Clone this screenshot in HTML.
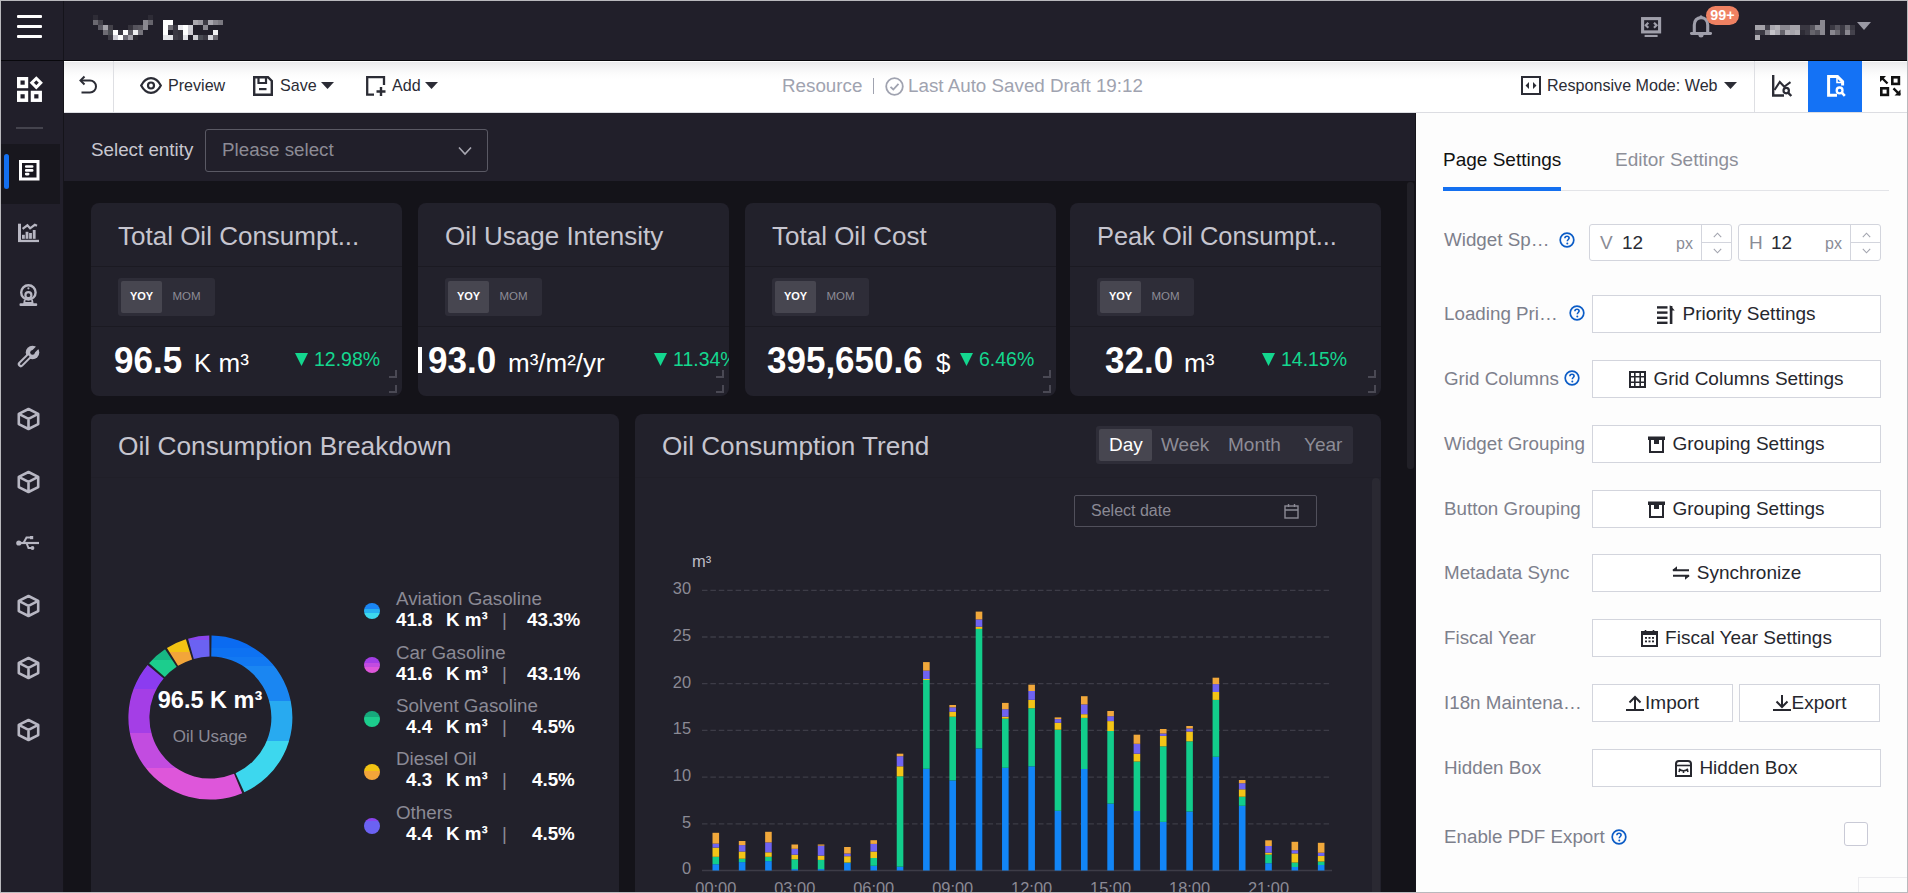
<!DOCTYPE html>
<html><head><meta charset="utf-8">
<style>
*{box-sizing:border-box;margin:0;padding:0}
html,body{width:1908px;height:893px;overflow:hidden;background:#141319;font-family:"Liberation Sans",sans-serif}
.a{position:absolute}
svg{position:absolute;overflow:visible}
#frame{position:absolute;left:0;top:0;width:1908px;height:893px;border:1px solid #b9b9bd;z-index:100;pointer-events:none}
#hdr{left:0;top:0;width:1908px;height:61px;background:#211f2a;border-bottom:1px solid #08080c}
#side{left:0;top:61px;width:64px;height:832px;background:#211f2a;border-right:1px solid #15141a}
#tb{left:64px;top:61px;width:1844px;height:52px;background:linear-gradient(#fdfdfd 0px,#fdfdfd 1px,#ebebed 1px,#f5f5f6 7px,#fbfbfb 12px,#fefefe 16px,#fff 18px);border-bottom:1px solid #dcdde2}
.tbt{position:absolute;font-size:16.1px;color:#2b2c35;line-height:18px;white-space:nowrap}
#filter{left:64px;top:113px;width:1351px;height:68px;background:#211f2a}
.card{position:absolute;background:#22212b;border-radius:8px;overflow:hidden}
.ct{position:absolute;left:27px;top:0;font-size:26px;color:#c6c5cf;line-height:26px;white-space:nowrap}
.hl{position:absolute;left:0;right:0;height:1px;background:#1b1a22}
.seg{position:absolute;left:27px;top:75px;width:97px;height:38px;background:#2e2d38;border-radius:3px}
.seg .on{position:absolute;left:3px;top:3px;width:41px;height:32px;background:#474650;border-radius:2px;color:#fff;font-size:11px;font-weight:bold;text-align:center;line-height:30px}
.seg .off{position:absolute;left:48px;top:3px;width:41px;height:32px;color:#8d8c96;font-size:11.5px;text-align:center;line-height:30px}
.big{position:absolute;font-size:35px;font-weight:bold;color:#fff;line-height:34px;white-space:nowrap;transform:scaleY(1.06);transform-origin:0 4.8px}
.unit{position:absolute;font-size:26px;color:#fff;line-height:26px;white-space:nowrap}
.pct{position:absolute;font-size:19.5px;color:#14d78f;line-height:20px;white-space:nowrap}
.rsz{position:absolute;width:8px;height:8px;border-right:2px solid #4a4954;border-bottom:2px solid #4a4954}
#rp{left:1415px;top:113px;width:493px;height:780px;background:#fdfdfd;border-left:1px solid #16151b}
.lbl{position:absolute;left:28px;font-size:18.8px;color:#7d808c;line-height:20px;white-space:nowrap}
.btn{position:absolute;left:177px;width:289px;height:38px;border:1px solid #d3d5dd;background:#fff;font-size:19px;color:#26272e;line-height:36px;white-space:nowrap;display:flex;justify-content:center;align-items:center}
.btn svg{position:static;flex:none}
.q{display:inline-block;width:15px;height:15px;border:1.6px solid #1a66d6;border-radius:50%;color:#1a66d6;font-size:11px;font-weight:bold;line-height:12px;text-align:center;vertical-align:middle}
.sic{position:absolute;left:18px;width:21px;height:21px}
.lg{position:absolute;left:396px;font-size:18.8px;color:#8b8a95;line-height:20px;white-space:nowrap}
.lv{position:absolute;font-size:18.8px;font-weight:bold;color:#fff;line-height:20px;white-space:nowrap}
.dot{position:absolute;left:364px;width:16px;height:16px;border-radius:50%}
</style></head><body>
<div id="frame"></div>

<!-- header -->
<div id="hdr" class="a">
  <div class="a" style="left:17px;top:15px;width:25px;height:3px;background:#fff;border-radius:1px"></div>
  <div class="a" style="left:17px;top:25px;width:25px;height:3px;background:#fff;border-radius:1px"></div>
  <div class="a" style="left:17px;top:35px;width:25px;height:3px;background:#fff;border-radius:1px"></div>
  <div class="a" style="left:63px;top:0;width:1px;height:60px;background:#15141b"></div>
  <div class="a" style="left:93px;top:15px;width:5px;height:5px;background:#2e2c36"></div><div class="a" style="left:148px;top:15px;width:5px;height:5px;background:#2e2c36"></div><div class="a" style="left:93px;top:20px;width:5px;height:5px;background:#6a6870"></div><div class="a" style="left:98px;top:20px;width:5px;height:5px;background:#45434c"></div><div class="a" style="left:143px;top:20px;width:5px;height:5px;background:#8a8890"></div><div class="a" style="left:148px;top:20px;width:5px;height:5px;background:#66646c"></div><div class="a" style="left:163px;top:20px;width:5px;height:5px;background:#ffffff"></div><div class="a" style="left:168px;top:20px;width:5px;height:5px;background:#ffffff"></div><div class="a" style="left:193px;top:20px;width:5px;height:5px;background:#aaa8ae"></div><div class="a" style="left:198px;top:20px;width:5px;height:5px;background:#9a98a0"></div><div class="a" style="left:203px;top:20px;width:5px;height:5px;background:#3c3a44"></div><div class="a" style="left:208px;top:20px;width:5px;height:5px;background:#a8a6ae"></div><div class="a" style="left:213px;top:20px;width:5px;height:5px;background:#88868e"></div><div class="a" style="left:218px;top:20px;width:5px;height:5px;background:#7a7880"></div><div class="a" style="left:98px;top:25px;width:5px;height:5px;background:#5a5862"></div><div class="a" style="left:103px;top:25px;width:5px;height:5px;background:#a5a3aa"></div><div class="a" style="left:108px;top:25px;width:5px;height:5px;background:#44424a"></div><div class="a" style="left:128px;top:25px;width:5px;height:5px;background:#35333c"></div><div class="a" style="left:133px;top:25px;width:5px;height:5px;background:#55535c"></div><div class="a" style="left:138px;top:25px;width:5px;height:5px;background:#5a5860"></div><div class="a" style="left:143px;top:25px;width:5px;height:5px;background:#8a8890"></div><div class="a" style="left:163px;top:25px;width:5px;height:5px;background:#ffffff"></div><div class="a" style="left:168px;top:25px;width:5px;height:5px;background:#6e6c74"></div><div class="a" style="left:173px;top:25px;width:5px;height:5px;background:#3a3842"></div><div class="a" style="left:178px;top:25px;width:5px;height:5px;background:#e8e8ec"></div><div class="a" style="left:183px;top:25px;width:5px;height:5px;background:#ffffff"></div><div class="a" style="left:188px;top:25px;width:5px;height:5px;background:#d0d0d6"></div><div class="a" style="left:203px;top:25px;width:5px;height:5px;background:#8a8890"></div><div class="a" style="left:103px;top:30px;width:5px;height:5px;background:#6e6c74"></div><div class="a" style="left:108px;top:30px;width:5px;height:5px;background:#4a4c52"></div><div class="a" style="left:113px;top:30px;width:5px;height:5px;background:#ffffff"></div><div class="a" style="left:118px;top:30px;width:5px;height:5px;background:#3a3842"></div><div class="a" style="left:123px;top:30px;width:5px;height:5px;background:#ffffff"></div><div class="a" style="left:128px;top:30px;width:5px;height:5px;background:#5e5c64"></div><div class="a" style="left:133px;top:30px;width:5px;height:5px;background:#eeeef0"></div><div class="a" style="left:138px;top:30px;width:5px;height:5px;background:#76747c"></div><div class="a" style="left:163px;top:30px;width:5px;height:5px;background:#ffffff"></div><div class="a" style="left:173px;top:30px;width:5px;height:5px;background:#3a3842"></div><div class="a" style="left:178px;top:30px;width:5px;height:5px;background:#35333c"></div><div class="a" style="left:183px;top:30px;width:5px;height:5px;background:#ffffff"></div><div class="a" style="left:188px;top:30px;width:5px;height:5px;background:#cccad0"></div><div class="a" style="left:213px;top:30px;width:5px;height:5px;background:#f0f0f2"></div><div class="a" style="left:108px;top:35px;width:5px;height:5px;background:#3e3c46"></div><div class="a" style="left:113px;top:35px;width:5px;height:5px;background:#ccccd4"></div><div class="a" style="left:118px;top:35px;width:5px;height:5px;background:#ffffff"></div><div class="a" style="left:123px;top:35px;width:5px;height:5px;background:#6a6872"></div><div class="a" style="left:128px;top:35px;width:5px;height:5px;background:#a2a0a8"></div><div class="a" style="left:133px;top:35px;width:5px;height:5px;background:#2a2830"></div><div class="a" style="left:163px;top:35px;width:5px;height:5px;background:#e4e4e8"></div><div class="a" style="left:168px;top:35px;width:5px;height:5px;background:#e4e4e8"></div><div class="a" style="left:173px;top:35px;width:5px;height:5px;background:#3e3c46"></div><div class="a" style="left:178px;top:35px;width:5px;height:5px;background:#36343e"></div><div class="a" style="left:183px;top:35px;width:5px;height:5px;background:#e4e4e8"></div><div class="a" style="left:193px;top:35px;width:5px;height:5px;background:#cfcfd4"></div><div class="a" style="left:198px;top:35px;width:5px;height:5px;background:#4a4c54"></div><div class="a" style="left:203px;top:35px;width:5px;height:5px;background:#3c3a44"></div><div class="a" style="left:208px;top:35px;width:5px;height:5px;background:#d4d4da"></div><div class="a" style="left:213px;top:35px;width:5px;height:5px;background:#6a6870"></div>
  <!-- monitor icon -->
  <svg style="left:1641px;top:17px" width="21" height="21" viewBox="0 0 21 21"><rect x="1.6" y="1.6" width="17" height="13.3" fill="none" stroke="#a09fab" stroke-width="3.1"/><path d="M7.3 5.8 4.8 8.3 7.3 10.8M13 5.8 15.5 8.3 13 10.8" fill="none" stroke="#a09fab" stroke-width="2.2"/><rect x="3.6" y="17.9" width="13" height="2.1" fill="#a09fab"/></svg>
  <!-- bell -->
  <svg style="left:1690px;top:15px" width="22" height="23" viewBox="0 0 22 23"><path d="M4.3 18V10C4.3 5.5 7 2.6 11 2.6S17.7 5.5 17.7 10V18" fill="none" stroke="#a09fab" stroke-width="3.1"/><rect x="0" y="16.9" width="22" height="3" rx="1.3" fill="#a09fab"/><circle cx="11" cy="1.8" r="1.5" fill="#a09fab"/><path d="M8.3 19.9H13.7Q13.5 22.4 11 22.4T8.3 19.9Z" fill="#a09fab"/></svg>
  <div class="a" style="left:1706px;top:5.5px;width:33px;height:19px;border-radius:9.5px;background:#ef8162;color:#fff;font-size:14.3px;font-weight:bold;text-align:center;line-height:18px">99+</div>
  <div class="a" style="left:1820px;top:20px;width:5px;height:5px;background:#8a8890"></div><div class="a" style="left:1755px;top:25px;width:5px;height:5px;background:#a5a3aa"></div><div class="a" style="left:1760px;top:25px;width:5px;height:5px;background:#a5a3aa"></div><div class="a" style="left:1765px;top:25px;width:5px;height:5px;background:#44424c"></div><div class="a" style="left:1770px;top:25px;width:5px;height:5px;background:#a8a6ae"></div><div class="a" style="left:1775px;top:25px;width:5px;height:5px;background:#b4b2b8"></div><div class="a" style="left:1780px;top:25px;width:5px;height:5px;background:#8a8890"></div><div class="a" style="left:1785px;top:25px;width:5px;height:5px;background:#8a8890"></div><div class="a" style="left:1790px;top:25px;width:5px;height:5px;background:#a5a3aa"></div><div class="a" style="left:1795px;top:25px;width:5px;height:5px;background:#a5a3aa"></div><div class="a" style="left:1800px;top:25px;width:5px;height:5px;background:#3a3842"></div><div class="a" style="left:1805px;top:25px;width:5px;height:5px;background:#3a3842"></div><div class="a" style="left:1810px;top:25px;width:5px;height:5px;background:#55535c"></div><div class="a" style="left:1815px;top:25px;width:5px;height:5px;background:#8a8890"></div><div class="a" style="left:1820px;top:25px;width:5px;height:5px;background:#8a8890"></div><div class="a" style="left:1830px;top:25px;width:5px;height:5px;background:#3a3842"></div><div class="a" style="left:1835px;top:25px;width:5px;height:5px;background:#55535c"></div><div class="a" style="left:1840px;top:25px;width:5px;height:5px;background:#3a3842"></div><div class="a" style="left:1845px;top:25px;width:5px;height:5px;background:#6a6870"></div><div class="a" style="left:1850px;top:25px;width:5px;height:5px;background:#3a3842"></div><div class="a" style="left:1755px;top:30px;width:5px;height:5px;background:#44424c"></div><div class="a" style="left:1760px;top:30px;width:5px;height:5px;background:#3a3842"></div><div class="a" style="left:1765px;top:30px;width:5px;height:5px;background:#8a8890"></div><div class="a" style="left:1770px;top:30px;width:5px;height:5px;background:#c4c2c8"></div><div class="a" style="left:1775px;top:30px;width:5px;height:5px;background:#aaa8b0"></div><div class="a" style="left:1780px;top:30px;width:5px;height:5px;background:#66646c"></div><div class="a" style="left:1785px;top:30px;width:5px;height:5px;background:#b0aeb4"></div><div class="a" style="left:1790px;top:30px;width:5px;height:5px;background:#a5a3aa"></div><div class="a" style="left:1795px;top:30px;width:5px;height:5px;background:#b0aeb4"></div><div class="a" style="left:1800px;top:30px;width:5px;height:5px;background:#2e2c36"></div><div class="a" style="left:1805px;top:30px;width:5px;height:5px;background:#3a3842"></div><div class="a" style="left:1810px;top:30px;width:5px;height:5px;background:#66646c"></div><div class="a" style="left:1815px;top:30px;width:5px;height:5px;background:#55535c"></div><div class="a" style="left:1820px;top:30px;width:5px;height:5px;background:#8a8890"></div><div class="a" style="left:1830px;top:30px;width:5px;height:5px;background:#8a8890"></div><div class="a" style="left:1835px;top:30px;width:5px;height:5px;background:#6a6870"></div><div class="a" style="left:1840px;top:30px;width:5px;height:5px;background:#3a3842"></div><div class="a" style="left:1845px;top:30px;width:5px;height:5px;background:#8a8890"></div><div class="a" style="left:1850px;top:30px;width:5px;height:5px;background:#44424c"></div><div class="a" style="left:1755px;top:35px;width:5px;height:5px;background:#b0aeb4"></div>
  <svg style="left:1857px;top:22px" width="14" height="9" viewBox="0 0 14 9"><path d="M0 0H14L7 8Z" fill="#9a99a4"/></svg>
</div>

<!-- sidebar -->
<div id="side" class="a">
  <svg style="left:17px;top:15.5px" width="27" height="27" viewBox="0 0 27 27"><rect x="1.75" y="1.75" width="7.7" height="7.7" fill="none" stroke="#fff" stroke-width="3.5"/><rect x="1.75" y="15.5" width="7.7" height="7.7" fill="none" stroke="#fff" stroke-width="3.5"/><rect x="15.5" y="15.5" width="7.7" height="7.7" fill="none" stroke="#fff" stroke-width="3.5"/><path d="M19.3 1.3 23.8 5.8 19.3 10.3 14.8 5.8Z" fill="none" stroke="#fff" stroke-width="3"/></svg>
  <div class="a" style="left:16px;top:66px;width:27px;height:2px;background:#44434d"></div>
  <div class="a" style="left:1px;top:83px;width:59px;height:60px;background:#18171e"></div>
  <div class="a" style="left:4px;top:93px;width:5px;height:35px;background:#1470f0;border-radius:3px"></div>
  <svg style="left:19.4px;top:99px" width="21" height="21" viewBox="0 0 21 21"><rect x="1.5" y="1.5" width="17.5" height="17.5" fill="none" stroke="#fff" stroke-width="3"/><path d="M7.2 6.5H13.2M7.2 10.4H13.2M7.2 14.1H9.2" stroke="#fff" stroke-width="2.6" stroke-linecap="round"/></svg>
  <!-- chart -->
  <svg style="left:18px;top:162px" width="22" height="20" viewBox="0 0 22 20"><rect x="0" y="0.7" width="3" height="18.3" fill="#b8b7c3"/><rect x="0" y="16.8" width="21" height="2.3" fill="#b8b7c3"/><rect x="4" y="11.8" width="2.8" height="4" fill="#b8b7c3"/><rect x="7.6" y="8.8" width="2.8" height="7" fill="#b8b7c3"/><rect x="11.1" y="10" width="2.8" height="5.8" fill="#b8b7c3"/><rect x="14.8" y="7" width="2.8" height="8.8" fill="#b8b7c3"/><path d="M4.6 5.8 9.4 2.3 12.1 5.3 16.8 1.8 19 2.8" fill="none" stroke="#b8b7c3" stroke-width="2.2"/></svg>
  <!-- webcam -->
  <svg style="left:18px;top:221px" width="21" height="25" viewBox="0 0 21 25"><circle cx="10.4" cy="10.4" r="7.2" fill="none" stroke="#b8b7c3" stroke-width="2.4"/><circle cx="10.4" cy="13.2" r="3" fill="none" stroke="#b8b7c3" stroke-width="2.2"/><circle cx="10.4" cy="6.3" r="1.1" fill="#b8b7c3"/><path d="M6.8 17.6 6.2 21H14.6L14 17.6" fill="none" stroke="#b8b7c3" stroke-width="1.8"/><rect x="1.5" y="21.2" width="17.7" height="2.7" rx="1" fill="#b8b7c3"/></svg>
  <!-- wrench -->
  <svg style="left:17px;top:284px" width="23" height="23" viewBox="0 0 23 23"><circle cx="15.5" cy="7.5" r="6.8" fill="#b8b7c3"/><path d="M15 8 3.8 19.2" stroke="#b8b7c3" stroke-width="6" stroke-linecap="round"/><path d="M15.5 7.5 22 1" stroke="#211f2a" stroke-width="3.4"/><circle cx="15.5" cy="7.5" r="2.3" fill="#211f2a"/><path d="M11.5 11.5 4 19" stroke="#211f2a" stroke-width="1.8" stroke-linecap="round"/></svg>
  <svg style="left:17.5px;top:346.5px" width="22" height="22" viewBox="0 0 22 22"><path d="M10.5 1 20.2 5.9V16.1L10.5 21 0.8 16.1V5.9Z M0.8 5.9 10.5 10.8 20.2 5.9 M10.5 10.8V21" fill="none" stroke="#b8b7c3" stroke-width="2.6" stroke-linejoin="round"/></svg><svg style="left:17.5px;top:409.5px" width="22" height="22" viewBox="0 0 22 22"><path d="M10.5 1 20.2 5.9V16.1L10.5 21 0.8 16.1V5.9Z M0.8 5.9 10.5 10.8 20.2 5.9 M10.5 10.8V21" fill="none" stroke="#b8b7c3" stroke-width="2.6" stroke-linejoin="round"/></svg><svg style="left:17.5px;top:533.5px" width="22" height="22" viewBox="0 0 22 22"><path d="M10.5 1 20.2 5.9V16.1L10.5 21 0.8 16.1V5.9Z M0.8 5.9 10.5 10.8 20.2 5.9 M10.5 10.8V21" fill="none" stroke="#b8b7c3" stroke-width="2.6" stroke-linejoin="round"/></svg><svg style="left:17.5px;top:595.5px" width="22" height="22" viewBox="0 0 22 22"><path d="M10.5 1 20.2 5.9V16.1L10.5 21 0.8 16.1V5.9Z M0.8 5.9 10.5 10.8 20.2 5.9 M10.5 10.8V21" fill="none" stroke="#b8b7c3" stroke-width="2.6" stroke-linejoin="round"/></svg><svg style="left:17.5px;top:657.5px" width="22" height="22" viewBox="0 0 22 22"><path d="M10.5 1 20.2 5.9V16.1L10.5 21 0.8 16.1V5.9Z M0.8 5.9 10.5 10.8 20.2 5.9 M10.5 10.8V21" fill="none" stroke="#b8b7c3" stroke-width="2.6" stroke-linejoin="round"/></svg>
  <!-- usb -->
  <svg style="left:16px;top:474px" width="24" height="16" viewBox="0 0 24 16"><circle cx="2.8" cy="8" r="2.6" fill="#b8b7c3"/><path d="M2.8 8H23" stroke="#b8b7c3" stroke-width="2.2"/><path d="M7.5 8 10.5 2.5H14.5M10.5 8 12.5 13H15" fill="none" stroke="#b8b7c3" stroke-width="2"/><rect x="14" y="1" width="3.2" height="3.2" fill="#b8b7c3"/><circle cx="16.5" cy="13" r="1.9" fill="#b8b7c3"/></svg>
</div>

<!-- toolbar -->
<div id="tb" class="a">
  <svg style="left:15px;top:14px" width="19" height="19" viewBox="0 0 19 19"><path d="M5.5 1.5 1.5 5.5 5.5 9.5" fill="none" stroke="#2b2c35" stroke-width="2"/><path d="M2 5.5H11C14.3 5.5 17 8.2 17 11.5S14.3 17.5 11 17.5H2.5" fill="none" stroke="#2b2c35" stroke-width="2"/></svg>
  <div class="a" style="left:49px;top:0;width:1px;height:51px;background:#dedfe3"></div>
  <svg style="left:76px;top:16px" width="22" height="17" viewBox="0 0 22 17"><path d="M1.2 8.5C3.5 4 7 1.2 11 1.2S18.5 4 20.8 8.5C18.5 13 15 15.8 11 15.8S3.5 13 1.2 8.5Z" fill="none" stroke="#2b2c35" stroke-width="2.2"/><circle cx="11" cy="8.5" r="3" fill="none" stroke="#2b2c35" stroke-width="2.2"/></svg>
  <div class="tbt" style="left:104px;top:15px">Preview</div>
  <svg style="left:189px;top:15px" width="20" height="20" viewBox="0 0 20 20"><path d="M1.2 1.2H15L18.8 5V18.8H1.2Z" fill="none" stroke="#2b2c35" stroke-width="2.4"/><path d="M5.5 1.2V7H13V1.2" fill="none" stroke="#2b2c35" stroke-width="2.2"/><rect x="6" y="12" width="7.5" height="2.2" fill="#2b2c35"/></svg>
  <div class="tbt" style="left:216px;top:15px">Save</div>
  <svg style="left:257px;top:21px" width="13" height="7" viewBox="0 0 13 7"><path d="M0 0H13L6.5 7Z" fill="#2b2c35"/></svg>
  <svg style="left:302px;top:15px" width="21" height="20" viewBox="0 0 21 20"><path d="M8 18.6H1.2V1.2H18V9" fill="none" stroke="#2b2c35" stroke-width="2.3"/><path d="M15 11V20M10.5 15.5H19.5" stroke="#2b2c35" stroke-width="2.4"/></svg>
  <div class="tbt" style="left:328px;top:15px">Add</div>
  <svg style="left:361px;top:21px" width="13" height="7" viewBox="0 0 13 7"><path d="M0 0H13L6.5 7Z" fill="#2b2c35"/></svg>

  <div class="tbt" style="left:718px;top:15px;font-size:18.8px;color:#a0a3b0;line-height:20px">Resource</div>
  <div class="a" style="left:809px;top:17px;width:1px;height:16px;background:#a0a3b0"></div>
  <svg style="left:821px;top:16px" width="19" height="19" viewBox="0 0 19 19"><circle cx="9.5" cy="9.5" r="8.3" fill="none" stroke="#a0a3b0" stroke-width="1.8"/><path d="M5.5 9.8 8.3 12.5 13.5 6.8" fill="none" stroke="#a0a3b0" stroke-width="1.8"/></svg>
  <div class="tbt" style="left:844px;top:15px;font-size:18.8px;color:#a0a3b0;line-height:20px">Last Auto Saved Draft 19:12</div>

  <svg style="left:1457px;top:15px" width="20" height="19" viewBox="0 0 20 19"><rect x="1" y="1" width="18" height="17" fill="none" stroke="#2b2c35" stroke-width="2"/><path d="M8 6V13L4.5 9.5Z M12 6V13L15.5 9.5Z" fill="#2b2c35"/></svg>
  <div class="tbt" style="left:1483px;top:15px">Responsive Mode: Web</div>
  <svg style="left:1660px;top:21px" width="13" height="7" viewBox="0 0 13 7"><path d="M0 0H13L6.5 7Z" fill="#2b2c35"/></svg>
  <div class="a" style="left:1690px;top:0;width:1px;height:51px;background:#dedfe3"></div>
  <svg style="left:1707px;top:14px" width="21" height="22" viewBox="0 0 21 22"><path d="M2.2 0V20.5H13" fill="none" stroke="#2b2c35" stroke-width="2.4"/><path d="M3.5 15 8.8 7 14 12.5M13.5 11.5 19.5 7.2" fill="none" stroke="#2b2c35" stroke-width="2.1"/><circle cx="15.2" cy="15.6" r="2.7" fill="none" stroke="#2b2c35" stroke-width="2.2"/><path d="M17 17.6 20.3 21" stroke="#2b2c35" stroke-width="2.4"/></svg>
  <div class="a" style="left:1744px;top:0;width:54px;height:51px;background:#1472f5"></div>
  <svg style="left:1763px;top:14px" width="19" height="22" viewBox="0 0 19 22"><path d="M10 20.3H1.6V1.6H10.5L15.6 6.7V10.5" fill="none" stroke="#fff" stroke-width="3"/><path d="M10 2V7.5H15" fill="none" stroke="#fff" stroke-width="1.6"/><circle cx="12.6" cy="15.4" r="2.9" fill="none" stroke="#fff" stroke-width="2.3"/><path d="M14.6 17.4 17.8 20.8" stroke="#fff" stroke-width="2.6"/></svg>
  <svg style="left:1816px;top:15px" width="21" height="20" viewBox="0 0 21 20"><rect x="12.3" y="1.3" width="6.6" height="6.6" fill="none" stroke="#111" stroke-width="2.6"/><rect x="1.3" y="12.3" width="6.6" height="6.6" fill="none" stroke="#111" stroke-width="2.6"/><path d="M1.5 1.5 7.5 7.5M20 18.8 13.5 12.3" fill="none" stroke="#111" stroke-width="2.4"/><path d="M0 0H6L0 6Z M20.5 19.5H14.5L20.5 13.5Z" fill="#111"/></svg>
</div>

<!-- filter -->
<div id="filter" class="a">
  <div class="a" style="left:27px;top:27px;font-size:18.8px;color:#c8c7d0;line-height:20px">Select entity</div>
  <div class="a" style="left:141px;top:16px;width:283px;height:43px;border:1px solid #5a5964;border-radius:3px"></div>
  <div class="a" style="left:158px;top:27px;font-size:18.8px;color:#8c8b95;line-height:20px">Please select</div>
  <svg style="left:394px;top:33px" width="14" height="10" viewBox="0 0 14 9"><path d="M1 1 7 7.5 13 1" fill="none" stroke="#a9a8b2" stroke-width="1.6"/></svg>
</div>
<!-- main scrollbar -->
<div class="a" style="left:1407px;top:182px;width:7px;height:287px;background:#212027;border-radius:3px"></div>

<!-- KPI cards -->
<div class="card" style="left:91px;top:203px;width:311px;height:193px">
  <div class="ct" style="top:20px">Total Oil Consumpt...</div>
  <div class="hl" style="top:63px"></div>
  <div class="seg"><div class="on">YOY</div><div class="off">MOM</div></div>
  <div class="hl" style="top:123px"></div>
  <div class="big" style="left:23px;top:140px">96.5</div>
  <div class="unit" style="left:103px;top:147px">K m³</div>
  <svg style="left:204px;top:150px" width="13" height="13" viewBox="0 0 13 13"><path d="M0 0H13L6.5 13Z" fill="#14d78f"/></svg>
  <div class="pct" style="left:223px;top:146px">12.98%</div>
  <div class="rsz" style="left:298px;top:167px"></div><div class="rsz" style="left:298px;top:182px"></div>
</div>
<div class="card" style="left:418px;top:203px;width:311px;height:193px">
  <div class="ct" style="top:20px">Oil Usage Intensity</div>
  <div class="hl" style="top:63px"></div>
  <div class="seg"><div class="on">YOY</div><div class="off">MOM</div></div>
  <div class="hl" style="top:123px"></div>
  <div class="big" style="left:10px;top:140px">93.0</div><div class="a" style="left:-1px;top:144px;width:5px;height:25.5px;background:#fff"></div>
  <div class="unit" style="left:90px;top:147px">m³/m²/yr</div>
  <svg style="left:236px;top:150px" width="13" height="13" viewBox="0 0 13 13"><path d="M0 0H13L6.5 13Z" fill="#14d78f"/></svg>
  <div class="pct" style="left:255px;top:146px">11.34%</div>
  <div class="rsz" style="left:298px;top:167px"></div><div class="rsz" style="left:298px;top:182px"></div>
</div>
<div class="card" style="left:745px;top:203px;width:311px;height:193px">
  <div class="ct" style="top:20px">Total Oil Cost</div>
  <div class="hl" style="top:63px"></div>
  <div class="seg"><div class="on">YOY</div><div class="off">MOM</div></div>
  <div class="hl" style="top:123px"></div>
  <div class="big" style="left:22px;top:140px">395,650.6</div>
  <div class="unit" style="left:191px;top:147px">$</div>
  <svg style="left:215px;top:150px" width="13" height="13" viewBox="0 0 13 13"><path d="M0 0H13L6.5 13Z" fill="#14d78f"/></svg>
  <div class="pct" style="left:234px;top:146px">6.46%</div>
  <div class="rsz" style="left:298px;top:167px"></div><div class="rsz" style="left:298px;top:182px"></div>
</div>
<div class="card" style="left:1070px;top:203px;width:311px;height:193px">
  <div class="ct" style="top:20px;font-size:25.4px">Peak Oil Consumpt...</div>
  <div class="hl" style="top:63px"></div>
  <div class="seg"><div class="on">YOY</div><div class="off">MOM</div></div>
  <div class="hl" style="top:123px"></div>
  <div class="big" style="left:35px;top:140px">32.0</div>
  <div class="unit" style="left:114px;top:147px">m³</div>
  <svg style="left:192px;top:150px" width="13" height="13" viewBox="0 0 13 13"><path d="M0 0H13L6.5 13Z" fill="#14d78f"/></svg>
  <div class="pct" style="left:211px;top:146px">14.15%</div>
  <div class="rsz" style="left:298px;top:167px"></div><div class="rsz" style="left:298px;top:182px"></div>
</div>

<!-- bottom cards -->
<div class="card" style="left:91px;top:414px;width:528px;height:500px">
  <div class="ct" style="top:19px;font-size:26.3px">Oil Consumption Breakdown</div>
  <div class="hl" style="top:63px;background:#201f28"></div>
</div>
<div class="card" style="left:635px;top:414px;width:746px;height:500px">
  <div class="ct" style="top:19px;left:27px;font-size:26.15px">Oil Consumption Trend</div>
  <div class="hl" style="top:63px;background:#201f28"></div>
  <div class="a" style="left:461px;top:12px;width:257px;height:38px;background:#2e2d38;border-radius:3px"></div>
  <div class="a" style="left:464px;top:15px;width:53px;height:32px;background:#474650;border-radius:2px"></div>
  <div class="a" style="left:474px;top:20px;font-size:19px;color:#fff;line-height:22px">Day</div>
  <div class="a" style="left:526px;top:20px;font-size:19px;color:#8d8c96;line-height:22px">Week</div>
  <div class="a" style="left:593px;top:20px;font-size:19px;color:#8d8c96;line-height:22px">Month</div>
  <div class="a" style="left:669px;top:20px;font-size:19px;color:#8d8c96;line-height:22px">Year</div>
  <div class="a" style="left:737px;top:64px;width:8px;height:436px;background:#2a2932;border-radius:4px"></div>
  <div class="a" style="left:439px;top:81px;width:243px;height:32px;border:1px solid #51505b;border-radius:2px"></div>
  <div class="a" style="left:456px;top:88px;font-size:16px;color:#8b8a95;line-height:18px">Select date</div>
  <svg style="left:649px;top:89px" width="15" height="16" viewBox="0 0 15 16"><rect x="1" y="3" width="13" height="12" fill="none" stroke="#8b8a95" stroke-width="1.4"/><path d="M1 7H14M4.5 1V4M10.5 1V4" stroke="#8b8a95" stroke-width="1.4"/></svg>
  <div class="a" style="left:57px;top:138px;font-size:16.5px;color:#bdbcc6;line-height:18px">m³</div>
</div>

<!-- donut legend -->
<svg style="left:0;top:0" width="1908" height="893">
  <defs>
    <linearGradient id="gA" gradientUnits="userSpaceOnUse" x1="0" y1="630" x2="0" y2="805"><stop offset="0.0000" stop-color="#0b6bf1"/><stop offset="0.1006" stop-color="#0b6bf1"/><stop offset="0.1006" stop-color="#0e72f2"/><stop offset="0.1571" stop-color="#0e72f2"/><stop offset="0.1571" stop-color="#1279f2"/><stop offset="0.2074" stop-color="#1279f2"/><stop offset="0.2074" stop-color="#1a86f2"/><stop offset="0.4034" stop-color="#1a86f2"/><stop offset="0.4034" stop-color="#28aaf0"/><stop offset="0.6331" stop-color="#28aaf0"/><stop offset="0.6331" stop-color="#3dd7ee"/><stop offset="1.0000" stop-color="#3dd7ee"/></linearGradient><linearGradient id="gB" gradientUnits="userSpaceOnUse" x1="0" y1="630" x2="0" y2="805"><stop offset="0.0000" stop-color="#8b3cf0"/><stop offset="0.3360" stop-color="#8b3cf0"/><stop offset="0.3360" stop-color="#a43ee6"/><stop offset="0.5880" stop-color="#a43ee6"/><stop offset="0.5880" stop-color="#c24ce0"/><stop offset="0.7897" stop-color="#c24ce0"/><stop offset="0.7897" stop-color="#de56da"/><stop offset="1.0000" stop-color="#de56da"/></linearGradient><linearGradient id="gC" gradientUnits="userSpaceOnUse" x1="0" y1="640" x2="0" y2="685"><stop offset="0.0000" stop-color="#14a57a"/><stop offset="0.2222" stop-color="#14a57a"/><stop offset="0.2222" stop-color="#17b783"/><stop offset="0.4444" stop-color="#17b783"/><stop offset="0.4444" stop-color="#1ccd8d"/><stop offset="1.0000" stop-color="#1ccd8d"/></linearGradient><linearGradient id="gD" gradientUnits="userSpaceOnUse" x1="0" y1="630" x2="0" y2="680"><stop offset="0.0000" stop-color="#f2c313"/><stop offset="0.4320" stop-color="#f2c313"/><stop offset="0.4320" stop-color="#f2a53a"/><stop offset="1.0000" stop-color="#f2a53a"/></linearGradient><linearGradient id="gE" gradientUnits="userSpaceOnUse" x1="0" y1="630" x2="0" y2="670"><stop offset="0.0000" stop-color="#8b45ee"/><stop offset="0.2450" stop-color="#8b45ee"/><stop offset="0.2450" stop-color="#6b62f2"/><stop offset="1.0000" stop-color="#6b62f2"/></linearGradient>
  </defs>
  <path d="M211.54,635.61A82,82 0 0 1 244.27,792.28L235.60,773.15A61,61 0 0 0 211.25,656.61Z" fill="url(#gA)"/><path d="M242.18,793.19A82,82 0 0 1 147.58,664.89L163.67,678.39A61,61 0 0 0 234.04,773.83Z" fill="url(#gB)"/><path d="M149.08,663.16A82,82 0 0 1 165.02,649.30L176.64,666.79A61,61 0 0 0 164.78,677.10Z" fill="url(#gC)"/><path d="M166.95,648.06A82,82 0 0 1 185.88,639.35L192.16,659.39A61,61 0 0 0 178.07,665.87Z" fill="url(#gD)"/><path d="M188.07,638.70A82,82 0 0 1 209.26,635.61L209.55,656.61A61,61 0 0 0 193.79,658.90Z" fill="url(#gE)"/>
  <line x1="702" y1="870.50" x2="1332" y2="870.50" stroke="#3d3c47" stroke-width="1.3"/><text x="691" y="874.30" text-anchor="end" font-size="16.4" fill="#8b8a95">0</text><line x1="702" y1="823.80" x2="1332" y2="823.80" stroke="#3d3c47" stroke-width="1.3" stroke-dasharray="5.5 2.9"/><text x="691" y="827.60" text-anchor="end" font-size="16.4" fill="#8b8a95">5</text><line x1="702" y1="777.10" x2="1332" y2="777.10" stroke="#3d3c47" stroke-width="1.3" stroke-dasharray="5.5 2.9"/><text x="691" y="780.90" text-anchor="end" font-size="16.4" fill="#8b8a95">10</text><line x1="702" y1="730.40" x2="1332" y2="730.40" stroke="#3d3c47" stroke-width="1.3" stroke-dasharray="5.5 2.9"/><text x="691" y="734.20" text-anchor="end" font-size="16.4" fill="#8b8a95">15</text><line x1="702" y1="683.70" x2="1332" y2="683.70" stroke="#3d3c47" stroke-width="1.3" stroke-dasharray="5.5 2.9"/><text x="691" y="687.50" text-anchor="end" font-size="16.4" fill="#8b8a95">20</text><line x1="702" y1="637.00" x2="1332" y2="637.00" stroke="#3d3c47" stroke-width="1.3" stroke-dasharray="5.5 2.9"/><text x="691" y="640.80" text-anchor="end" font-size="16.4" fill="#8b8a95">25</text><line x1="702" y1="590.30" x2="1332" y2="590.30" stroke="#3d3c47" stroke-width="1.3" stroke-dasharray="5.5 2.9"/><text x="691" y="594.10" text-anchor="end" font-size="16.4" fill="#8b8a95">30</text><text x="715.80" y="893.5" text-anchor="middle" font-size="16.4" fill="#8b8a95">00:00</text><text x="794.76" y="893.5" text-anchor="middle" font-size="16.4" fill="#8b8a95">03:00</text><text x="873.72" y="893.5" text-anchor="middle" font-size="16.4" fill="#8b8a95">06:00</text><text x="952.68" y="893.5" text-anchor="middle" font-size="16.4" fill="#8b8a95">09:00</text><text x="1031.64" y="893.5" text-anchor="middle" font-size="16.4" fill="#8b8a95">12:00</text><text x="1110.60" y="893.5" text-anchor="middle" font-size="16.4" fill="#8b8a95">15:00</text><text x="1189.56" y="893.5" text-anchor="middle" font-size="16.4" fill="#8b8a95">18:00</text><text x="1268.52" y="893.5" text-anchor="middle" font-size="16.4" fill="#8b8a95">21:00</text>
  <rect x="712.50" y="864.20" width="6.6" height="6.30" fill="#1285f6"/><rect x="712.50" y="856.80" width="6.6" height="7.40" fill="#12cd8b"/><rect x="712.50" y="847.60" width="6.6" height="9.20" fill="#f3c417"/><rect x="712.50" y="843.60" width="6.6" height="4.00" fill="#6f63f1"/><rect x="712.50" y="832.80" width="6.6" height="10.80" fill="#f1a83b"/><rect x="738.82" y="862.10" width="6.6" height="8.40" fill="#1285f6"/><rect x="738.82" y="858.70" width="6.6" height="3.40" fill="#12cd8b"/><rect x="738.82" y="851.50" width="6.6" height="7.20" fill="#f3c417"/><rect x="738.82" y="845.10" width="6.6" height="6.40" fill="#6f63f1"/><rect x="738.82" y="841.00" width="6.6" height="4.10" fill="#f1a83b"/><rect x="765.14" y="861.10" width="6.6" height="9.40" fill="#1285f6"/><rect x="765.14" y="856.80" width="6.6" height="4.30" fill="#12cd8b"/><rect x="765.14" y="852.30" width="6.6" height="4.50" fill="#f3c417"/><rect x="765.14" y="842.40" width="6.6" height="9.90" fill="#6f63f1"/><rect x="765.14" y="831.80" width="6.6" height="10.60" fill="#f1a83b"/><rect x="791.46" y="869.10" width="6.6" height="1.40" fill="#1285f6"/><rect x="791.46" y="859.30" width="6.6" height="9.80" fill="#12cd8b"/><rect x="791.46" y="854.70" width="6.6" height="4.60" fill="#f3c417"/><rect x="791.46" y="848.80" width="6.6" height="5.90" fill="#6f63f1"/><rect x="791.46" y="844.50" width="6.6" height="4.30" fill="#f1a83b"/><rect x="817.78" y="869.10" width="6.6" height="1.40" fill="#1285f6"/><rect x="817.78" y="859.90" width="6.6" height="9.20" fill="#12cd8b"/><rect x="817.78" y="855.60" width="6.6" height="4.30" fill="#f3c417"/><rect x="817.78" y="845.70" width="6.6" height="9.90" fill="#6f63f1"/><rect x="817.78" y="844.50" width="6.6" height="1.20" fill="#f1a83b"/><rect x="844.10" y="863.00" width="6.6" height="7.50" fill="#1285f6"/><rect x="844.10" y="862.50" width="6.6" height="0.50" fill="#12cd8b"/><rect x="844.10" y="856.20" width="6.6" height="6.30" fill="#f3c417"/><rect x="844.10" y="853.50" width="6.6" height="2.70" fill="#6f63f1"/><rect x="844.10" y="847.00" width="6.6" height="6.50" fill="#f1a83b"/><rect x="870.42" y="865.80" width="6.6" height="4.70" fill="#1285f6"/><rect x="870.42" y="858.00" width="6.6" height="7.80" fill="#12cd8b"/><rect x="870.42" y="851.50" width="6.6" height="6.50" fill="#f3c417"/><rect x="870.42" y="843.90" width="6.6" height="7.60" fill="#6f63f1"/><rect x="870.42" y="840.20" width="6.6" height="3.70" fill="#f1a83b"/><rect x="896.74" y="866.70" width="6.6" height="3.80" fill="#1285f6"/><rect x="896.74" y="776.30" width="6.6" height="90.40" fill="#12cd8b"/><rect x="896.74" y="766.30" width="6.6" height="10.00" fill="#f3c417"/><rect x="896.74" y="756.20" width="6.6" height="10.10" fill="#6f63f1"/><rect x="896.74" y="753.70" width="6.6" height="2.50" fill="#f1a83b"/><rect x="923.06" y="768.80" width="6.6" height="101.70" fill="#1285f6"/><rect x="923.06" y="680.00" width="6.6" height="88.80" fill="#12cd8b"/><rect x="923.06" y="679.00" width="6.6" height="1.00" fill="#f3c417"/><rect x="923.06" y="670.60" width="6.6" height="8.40" fill="#6f63f1"/><rect x="923.06" y="662.10" width="6.6" height="8.50" fill="#f1a83b"/><rect x="949.38" y="780.40" width="6.6" height="90.10" fill="#1285f6"/><rect x="949.38" y="716.70" width="6.6" height="63.70" fill="#12cd8b"/><rect x="949.38" y="711.70" width="6.6" height="5.00" fill="#f3c417"/><rect x="949.38" y="707.30" width="6.6" height="4.40" fill="#6f63f1"/><rect x="949.38" y="705.00" width="6.6" height="2.30" fill="#f1a83b"/><rect x="975.70" y="748.40" width="6.6" height="122.10" fill="#1285f6"/><rect x="975.70" y="628.90" width="6.6" height="119.50" fill="#12cd8b"/><rect x="975.70" y="626.70" width="6.6" height="2.20" fill="#f3c417"/><rect x="975.70" y="619.40" width="6.6" height="7.30" fill="#6f63f1"/><rect x="975.70" y="611.60" width="6.6" height="7.80" fill="#f1a83b"/><rect x="1002.02" y="767.80" width="6.6" height="102.70" fill="#1285f6"/><rect x="1002.02" y="718.60" width="6.6" height="49.20" fill="#12cd8b"/><rect x="1002.02" y="716.70" width="6.6" height="1.90" fill="#f3c417"/><rect x="1002.02" y="709.20" width="6.6" height="7.50" fill="#6f63f1"/><rect x="1002.02" y="702.90" width="6.6" height="6.30" fill="#f1a83b"/><rect x="1028.34" y="766.30" width="6.6" height="104.20" fill="#1285f6"/><rect x="1028.34" y="708.20" width="6.6" height="58.10" fill="#12cd8b"/><rect x="1028.34" y="699.80" width="6.6" height="8.40" fill="#f3c417"/><rect x="1028.34" y="691.00" width="6.6" height="8.80" fill="#6f63f1"/><rect x="1028.34" y="684.70" width="6.6" height="6.30" fill="#f1a83b"/><rect x="1054.66" y="810.80" width="6.6" height="59.70" fill="#1285f6"/><rect x="1054.66" y="729.70" width="6.6" height="81.10" fill="#12cd8b"/><rect x="1054.66" y="722.80" width="6.6" height="6.90" fill="#f3c417"/><rect x="1054.66" y="719.10" width="6.6" height="3.70" fill="#6f63f1"/><rect x="1054.66" y="717.40" width="6.6" height="1.70" fill="#f1a83b"/><rect x="1080.98" y="769.00" width="6.6" height="101.50" fill="#1285f6"/><rect x="1080.98" y="717.90" width="6.6" height="51.10" fill="#12cd8b"/><rect x="1080.98" y="714.20" width="6.6" height="3.70" fill="#f3c417"/><rect x="1080.98" y="704.40" width="6.6" height="9.80" fill="#6f63f1"/><rect x="1080.98" y="696.20" width="6.6" height="8.20" fill="#f1a83b"/><rect x="1107.30" y="803.60" width="6.6" height="66.90" fill="#1285f6"/><rect x="1107.30" y="731.00" width="6.6" height="72.60" fill="#12cd8b"/><rect x="1107.30" y="721.10" width="6.6" height="9.90" fill="#f3c417"/><rect x="1107.30" y="716.20" width="6.6" height="4.90" fill="#6f63f1"/><rect x="1107.30" y="711.00" width="6.6" height="5.20" fill="#f1a83b"/><rect x="1133.62" y="811.00" width="6.6" height="59.50" fill="#1285f6"/><rect x="1133.62" y="761.50" width="6.6" height="49.50" fill="#12cd8b"/><rect x="1133.62" y="753.70" width="6.6" height="7.80" fill="#f3c417"/><rect x="1133.62" y="743.80" width="6.6" height="9.90" fill="#6f63f1"/><rect x="1133.62" y="734.70" width="6.6" height="9.10" fill="#f1a83b"/><rect x="1159.94" y="821.90" width="6.6" height="48.60" fill="#1285f6"/><rect x="1159.94" y="746.30" width="6.6" height="75.60" fill="#12cd8b"/><rect x="1159.94" y="735.90" width="6.6" height="10.40" fill="#f3c417"/><rect x="1159.94" y="733.50" width="6.6" height="2.40" fill="#6f63f1"/><rect x="1159.94" y="729.00" width="6.6" height="4.50" fill="#f1a83b"/><rect x="1186.26" y="811.50" width="6.6" height="59.00" fill="#1285f6"/><rect x="1186.26" y="741.30" width="6.6" height="70.20" fill="#12cd8b"/><rect x="1186.26" y="731.50" width="6.6" height="9.80" fill="#f3c417"/><rect x="1186.26" y="728.50" width="6.6" height="3.00" fill="#6f63f1"/><rect x="1186.26" y="726.00" width="6.6" height="2.50" fill="#f1a83b"/><rect x="1212.58" y="756.80" width="6.6" height="113.70" fill="#1285f6"/><rect x="1212.58" y="699.90" width="6.6" height="56.90" fill="#12cd8b"/><rect x="1212.58" y="692.00" width="6.6" height="7.90" fill="#f3c417"/><rect x="1212.58" y="684.10" width="6.6" height="7.90" fill="#6f63f1"/><rect x="1212.58" y="677.70" width="6.6" height="6.40" fill="#f1a83b"/><rect x="1238.90" y="805.80" width="6.6" height="64.70" fill="#1285f6"/><rect x="1238.90" y="796.70" width="6.6" height="9.10" fill="#12cd8b"/><rect x="1238.90" y="789.30" width="6.6" height="7.40" fill="#f3c417"/><rect x="1238.90" y="783.20" width="6.6" height="6.10" fill="#6f63f1"/><rect x="1238.90" y="780.00" width="6.6" height="3.20" fill="#f1a83b"/><rect x="1265.22" y="863.20" width="6.6" height="7.30" fill="#1285f6"/><rect x="1265.22" y="854.60" width="6.6" height="8.60" fill="#12cd8b"/><rect x="1265.22" y="852.70" width="6.6" height="1.90" fill="#f3c417"/><rect x="1265.22" y="846.00" width="6.6" height="6.70" fill="#6f63f1"/><rect x="1265.22" y="840.30" width="6.6" height="5.70" fill="#f1a83b"/><rect x="1291.54" y="867.00" width="6.6" height="3.50" fill="#1285f6"/><rect x="1291.54" y="862.50" width="6.6" height="4.50" fill="#12cd8b"/><rect x="1291.54" y="853.40" width="6.6" height="9.10" fill="#f3c417"/><rect x="1291.54" y="850.20" width="6.6" height="3.20" fill="#6f63f1"/><rect x="1291.54" y="841.80" width="6.6" height="8.40" fill="#f1a83b"/><rect x="1317.86" y="865.00" width="6.6" height="5.50" fill="#1285f6"/><rect x="1317.86" y="861.50" width="6.6" height="3.50" fill="#12cd8b"/><rect x="1317.86" y="855.90" width="6.6" height="5.60" fill="#f3c417"/><rect x="1317.86" y="852.70" width="6.6" height="3.20" fill="#6f63f1"/><rect x="1317.86" y="842.80" width="6.6" height="9.90" fill="#f1a83b"/>
</svg>
<div class="a" style="left:150px;top:687px;width:120px;text-align:center;font-size:23.5px;font-weight:bold;color:#fff;line-height:26px">96.5 K m³</div>
<div class="a" style="left:150px;top:727px;width:120px;text-align:center;font-size:17px;color:#8b8a95;line-height:20px">Oil Usage</div>

<div class="dot" style="top:603px;background:linear-gradient(#1a86f4 35%,#27b0f1 35%,#27b0f1 62%,#3dd8ee 62%)"></div>
<div class="lg" style="top:589px">Aviation Gasoline</div>
<div class="lv" style="top:610px;left:396px">41.8</div><div class="lv" style="top:610px;left:446px">K m³</div>
<div class="lv" style="top:610px;left:502px;font-weight:normal;color:#8b8a95">|</div>
<div class="lv" style="top:610px;left:527px">43.3%</div>

<div class="dot" style="top:657px;background:linear-gradient(#a43ee6 38%,#c24ce0 38%,#c24ce0 65%,#de56da 65%)"></div>
<div class="lg" style="top:643px">Car Gasoline</div>
<div class="lv" style="top:664px;left:396px">41.6</div><div class="lv" style="top:664px;left:446px">K m³</div>
<div class="lv" style="top:664px;left:502px;font-weight:normal;color:#8b8a95">|</div>
<div class="lv" style="top:664px;left:527px">43.1%</div>

<div class="dot" style="top:711px;background:linear-gradient(#17a97c 40%,#1ccd8d 40%)"></div>
<div class="lg" style="top:696px">Solvent Gasoline</div>
<div class="lv" style="top:717px;left:406px">4.4</div><div class="lv" style="top:717px;left:446px">K m³</div>
<div class="lv" style="top:717px;left:502px;font-weight:normal;color:#8b8a95">|</div>
<div class="lv" style="top:717px;left:532px">4.5%</div>

<div class="dot" style="top:764px;background:linear-gradient(#f2c313 45%,#f2a53a 45%)"></div>
<div class="lg" style="top:749px">Diesel Oil</div>
<div class="lv" style="top:770px;left:406px">4.3</div><div class="lv" style="top:770px;left:446px">K m³</div>
<div class="lv" style="top:770px;left:502px;font-weight:normal;color:#8b8a95">|</div>
<div class="lv" style="top:770px;left:532px">4.5%</div>

<div class="dot" style="top:818px;background:linear-gradient(#8b45ee 20%,#6b62f2 20%)"></div>
<div class="lg" style="top:803px">Others</div>
<div class="lv" style="top:824px;left:406px">4.4</div><div class="lv" style="top:824px;left:446px">K m³</div>
<div class="lv" style="top:824px;left:502px;font-weight:normal;color:#8b8a95">|</div>
<div class="lv" style="top:824px;left:532px">4.5%</div>

<!-- right panel -->
<div id="rp" class="a">
  <div class="a" style="left:27px;top:37px;font-size:19px;color:#111;line-height:20px">Page Settings</div>
  <div class="a" style="left:199px;top:37px;font-size:19px;color:#8d8f99;line-height:20px">Editor Settings</div>
  <div class="a" style="left:27px;top:77px;width:446px;height:1px;background:#e3e4e8"></div>
  <div class="a" style="left:27px;top:74px;width:118px;height:3.5px;background:#1470f0"></div>
  <div class="lbl" style="top:117px">Widget Sp…</div><svg width="16" height="16" viewBox="0 0 16 16" style="position:absolute;left:143px;top:119px"><circle cx="8" cy="8" r="6.8" fill="none" stroke="#0b5cc6" stroke-width="1.7"/><path d="M5.9 6.2C5.9 4.9 6.8 4.2 8 4.2S10.1 5 10.1 6.1C10.1 7.4 8.3 7.6 8.3 9.2" fill="none" stroke="#0b5cc6" stroke-width="1.6"/><circle cx="8.3" cy="11.5" r="1" fill="#0b5cc6"/></svg>
<div class="a" style="left:173px;top:111px;width:143px;height:37px;border:1px solid #d3d5dd;border-radius:3px;background:#fff">
    <div class="a" style="left:10px;top:8px;font-size:19px;color:#8a8c96;line-height:20px">V</div>
    <div class="a" style="left:32px;top:8px;font-size:19px;color:#2b2c35;line-height:20px">12</div>
    <div class="a" style="left:86px;top:9px;font-size:16px;color:#8a8c96;line-height:20px">px</div>
    <div class="a" style="left:111px;top:0;width:1px;height:35px;background:#d3d5dd"></div>
    <div class="a" style="left:112px;top:17px;width:29px;height:1px;background:#d3d5dd"></div>
    <svg style="left:123px;top:7px" width="9" height="6" viewBox="0 0 9 6"><path d="M.8 5.2 4.5 1.2 8.2 5.2" fill="none" stroke="#a3a5af" stroke-width="1.1"/></svg>
    <svg style="left:123px;top:23px" width="9" height="6" viewBox="0 0 9 6"><path d="M.8 .8 4.5 4.8 8.2 .8" fill="none" stroke="#a3a5af" stroke-width="1.1"/></svg>
  </div>
<div class="a" style="left:322px;top:111px;width:143px;height:37px;border:1px solid #d3d5dd;border-radius:3px;background:#fff">
    <div class="a" style="left:10px;top:8px;font-size:19px;color:#8a8c96;line-height:20px">H</div>
    <div class="a" style="left:32px;top:8px;font-size:19px;color:#2b2c35;line-height:20px">12</div>
    <div class="a" style="left:86px;top:9px;font-size:16px;color:#8a8c96;line-height:20px">px</div>
    <div class="a" style="left:111px;top:0;width:1px;height:35px;background:#d3d5dd"></div>
    <div class="a" style="left:112px;top:17px;width:29px;height:1px;background:#d3d5dd"></div>
    <svg style="left:123px;top:7px" width="9" height="6" viewBox="0 0 9 6"><path d="M.8 5.2 4.5 1.2 8.2 5.2" fill="none" stroke="#a3a5af" stroke-width="1.1"/></svg>
    <svg style="left:123px;top:23px" width="9" height="6" viewBox="0 0 9 6"><path d="M.8 .8 4.5 4.8 8.2 .8" fill="none" stroke="#a3a5af" stroke-width="1.1"/></svg>
  </div>
  <div class="lbl" style="top:191px">Loading Pri…</div><svg width="16" height="16" viewBox="0 0 16 16" style="position:absolute;left:153px;top:192px"><circle cx="8" cy="8" r="6.8" fill="none" stroke="#0b5cc6" stroke-width="1.7"/><path d="M5.9 6.2C5.9 4.9 6.8 4.2 8 4.2S10.1 5 10.1 6.1C10.1 7.4 8.3 7.6 8.3 9.2" fill="none" stroke="#0b5cc6" stroke-width="1.6"/><circle cx="8.3" cy="11.5" r="1" fill="#0b5cc6"/></svg>
<div class="btn" style="top:182px;left:176px;width:289px"><svg width="18" height="19" viewBox="0 0 18 19"><rect x="0" y="1.2" width="10.5" height="2.4" fill="#26272e"/><rect x="0" y="6.4" width="10.5" height="2.4" fill="#26272e"/><rect x="0" y="11.6" width="10.5" height="2.4" fill="#26272e"/><rect x="0" y="16.6" width="10.5" height="2.4" fill="#26272e"/><rect x="12.8" y="1" width="2.6" height="18" fill="#26272e"/><path d="M12.8 0 17.8 5.5H12.8Z" fill="#26272e"/></svg><span style="margin-left:7px">Priority Settings</span></div>
  <div class="lbl" style="top:256px">Grid Columns</div><svg width="16" height="16" viewBox="0 0 16 16" style="position:absolute;left:148px;top:257px"><circle cx="8" cy="8" r="6.8" fill="none" stroke="#0b5cc6" stroke-width="1.7"/><path d="M5.9 6.2C5.9 4.9 6.8 4.2 8 4.2S10.1 5 10.1 6.1C10.1 7.4 8.3 7.6 8.3 9.2" fill="none" stroke="#0b5cc6" stroke-width="1.6"/><circle cx="8.3" cy="11.5" r="1" fill="#0b5cc6"/></svg>
<div class="btn" style="top:247px;left:176px;width:289px"><svg width="17" height="17" viewBox="0 0 17 17"><rect x="1" y="1" width="15" height="15" fill="none" stroke="#26272e" stroke-width="2"/><path d="M5.8 1V16M11.2 1V16M1 5.8H16M1 11.2H16" stroke="#26272e" stroke-width="1.6"/></svg><span style="margin-left:7px">Grid Columns Settings</span></div>
  <div class="lbl" style="top:321px">Widget Grouping</div>
<div class="btn" style="top:312px;left:176px;width:289px"><svg width="17" height="17" viewBox="0 0 17 17"><rect x="0" y="0.5" width="17" height="3.5" fill="#26272e"/><path d="M2 4V16H15V4" fill="none" stroke="#26272e" stroke-width="2"/><rect x="6" y="4" width="5" height="4" fill="#26272e"/></svg><span style="margin-left:7px">Grouping Settings</span></div>
  <div class="lbl" style="top:386px">Button Grouping</div>
<div class="btn" style="top:377px;left:176px;width:289px"><svg width="17" height="17" viewBox="0 0 17 17"><rect x="0" y="0.5" width="17" height="3.5" fill="#26272e"/><path d="M2 4V16H15V4" fill="none" stroke="#26272e" stroke-width="2"/><rect x="6" y="4" width="5" height="4" fill="#26272e"/></svg><span style="margin-left:7px">Grouping Settings</span></div>
  <div class="lbl" style="top:450px">Metadata Sync</div>
<div class="btn" style="top:441px;left:176px;width:289px"><svg width="18" height="14" viewBox="0 0 18 14"><path d="M1 4.2H17M1 9.8H17" stroke="#26272e" stroke-width="2"/><path d="M0 4.2 5 0.2V4.2Z M18 9.8 13 13.8V9.8Z" fill="#26272e"/></svg><span style="margin-left:7px">Synchronize</span></div>
  <div class="lbl" style="top:515px">Fiscal Year</div>
<div class="btn" style="top:506px;left:176px;width:289px"><svg width="17" height="17" viewBox="0 0 17 17"><rect x="1" y="2" width="15" height="14" fill="none" stroke="#26272e" stroke-width="2"/><rect x="1" y="2" width="15" height="3" fill="#26272e"/><path d="M4.5 0V3M12.5 0V3" stroke="#26272e" stroke-width="1.6"/><g fill="#26272e"><rect x="4" y="7" width="2" height="1.8"/><rect x="7.5" y="7" width="2" height="1.8"/><rect x="11" y="7" width="2" height="1.8"/><rect x="4" y="10.5" width="2" height="1.8"/><rect x="7.5" y="10.5" width="2" height="1.8"/><rect x="11" y="10.5" width="2" height="1.8"/></g></svg><span style="margin-left:7px">Fiscal Year Settings</span></div>
  <div class="lbl" style="top:580px">I18n Maintena…</div>
<div class="btn" style="top:571px;left:176px;width:141px"><svg width="18" height="16" viewBox="0 0 18 16"><path d="M9 14V2M3.5 7.5 9 2 14.5 7.5M0 15H18" fill="none" stroke="#26272e" stroke-width="2"/></svg><span style="margin-left:1px">Import</span></div>
<div class="btn" style="top:571px;left:323px;width:141px"><svg width="18" height="16" viewBox="0 0 18 16"><path d="M9 0V12M3.5 6.5 9 12 14.5 6.5M0 15H18" fill="none" stroke="#26272e" stroke-width="2"/></svg><span style="margin-left:1px">Export</span></div>
  <div class="lbl" style="top:645px">Hidden Box</div>
<div class="btn" style="top:636px;left:176px;width:289px"><svg width="17" height="17" viewBox="0 0 17 17"><path d="M1 16V4Q1 1 4 1H13Q16 1 16 4V16Z" fill="none" stroke="#26272e" stroke-width="2"/><path d="M1 5.5H16" stroke="#26272e" stroke-width="1.6"/><path d="M4 9Q8.5 12.5 13 9M5 9 4 12M12 9 13 12M8.5 11V13" fill="none" stroke="#26272e" stroke-width="1.6"/></svg><span style="margin-left:7px">Hidden Box</span></div>
  <div class="lbl" style="top:714px">Enable PDF Export</div><svg width="16" height="16" viewBox="0 0 16 16" style="position:absolute;left:195px;top:716px"><circle cx="8" cy="8" r="6.8" fill="none" stroke="#0b5cc6" stroke-width="1.7"/><path d="M5.9 6.2C5.9 4.9 6.8 4.2 8 4.2S10.1 5 10.1 6.1C10.1 7.4 8.3 7.6 8.3 9.2" fill="none" stroke="#0b5cc6" stroke-width="1.6"/><circle cx="8.3" cy="11.5" r="1" fill="#0b5cc6"/></svg>
  <div class="a" style="left:428px;top:709px;width:24px;height:24px;border:1.5px solid #c9cad6;border-radius:3px;background:#fff"></div>
</div>
<div class="a" style="left:1858px;top:877px;width:52px;height:20px;border:1px solid #ececef;border-right:none;border-bottom:none"></div>
</body></html>
